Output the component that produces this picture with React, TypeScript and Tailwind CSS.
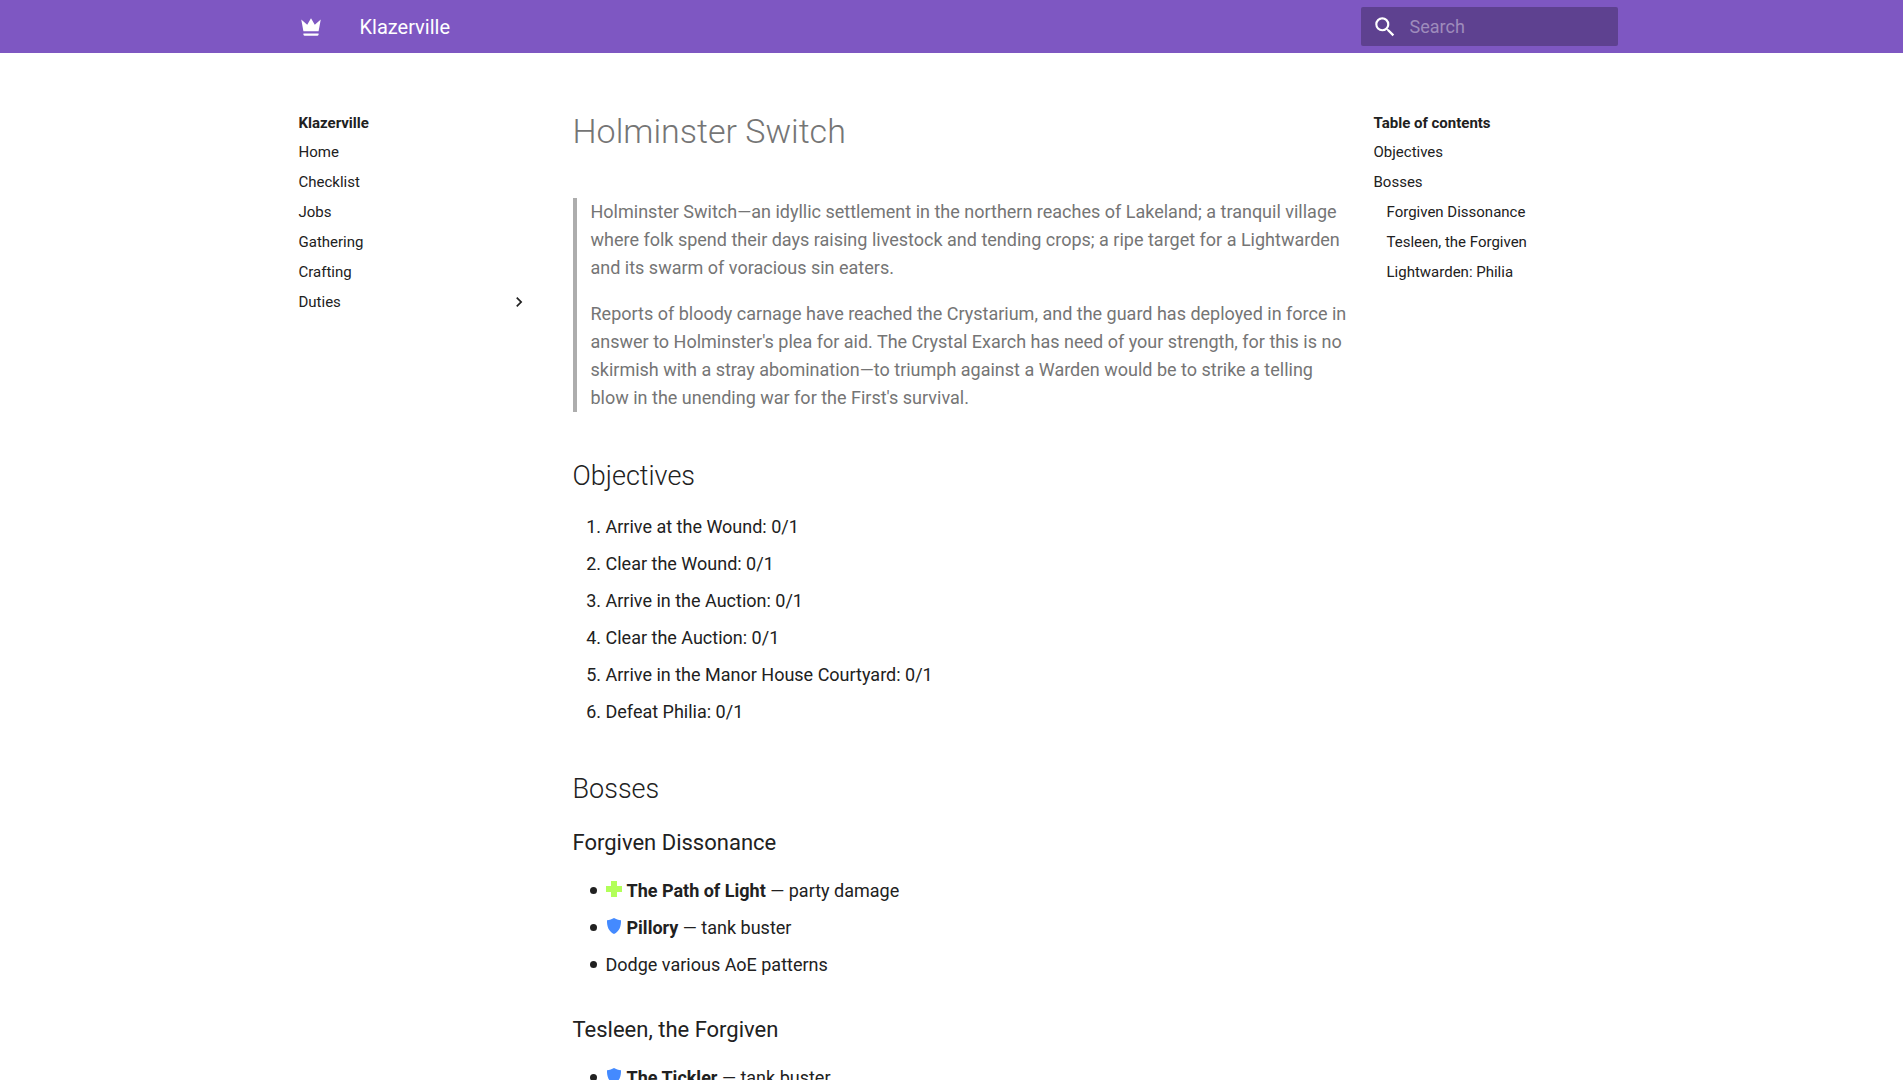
import React from "react";

const navItems = ["Home", "Checklist", "Jobs", "Gathering", "Crafting"];

const objectives = [
  "Arrive at the Wound: 0/1",
  "Clear the Wound: 0/1",
  "Arrive in the Auction: 0/1",
  "Clear the Auction: 0/1",
  "Arrive in the Manor House Courtyard: 0/1",
  "Defeat Philia: 0/1",
];

function CrownIcon() {
  return (
    <svg viewBox="0 0 24 24" className="size-[26px] fill-current" aria-hidden="true">
      <path d="M5 16 3 5l5.500 5L12 4l3.500 6L21 5l-2 11H5m14 3c0 .6-.4 1-1 1H6c-.6 0-1-.4-1-1v-1h14v1z" />
    </svg>
  );
}

function SearchIcon() {
  return (
    <svg viewBox="0 0 24 24" className="size-[26px] shrink-0 fill-current" aria-hidden="true">
      <path d="M9.500 3A6.500 6.500 0 0 1 16 9.500c0 1.610-.59 3.090-1.560 4.230l.27.270h.79l5 5-1.500 1.500-5-5v-.79l-.27-.27A6.516 6.516 0 0 1 9.500 16 6.500 6.500 0 0 1 3 9.500 6.500 6.500 0 0 1 9.500 3m0 2C7 5 5 7 5 9.500S7 14 9.500 14 14 12 14 9.500 12 5 9.500 5z" />
    </svg>
  );
}

function ChevronIcon() {
  return (
    <svg viewBox="0 0 24 24" className="size-5 fill-current" aria-hidden="true">
      <path d="M8.590 16.580 13.170 12 8.590 7.410 10 6l6 6-6 6-1.410-1.420z" />
    </svg>
  );
}

function HealIcon() {
  return (
    <svg viewBox="0 0 16 16" className="mr-[5px] inline-block size-4 align-[0px] fill-[#b2ff59]" role="img" aria-label="Healer">
      <path d="M5 0h6v5h5v6h-5v5H5v-5H0V5h5z" />
    </svg>
  );
}

function ShieldIcon() {
  return (
    <svg viewBox="0 0 16 16" className="mr-[5px] inline-block size-4 align-[0px] fill-[#448aff]" role="img" aria-label="Tank">
      <path d="M8 0c2 1.200 4.500 2 7 2.300.2 6-1.500 11.200-7 13.700C2.500 13.500.8 8.300 1 2.300 3.500 2 6 1.200 8 0z" />
    </svg>
  );
}

function Bullet({ children }: { children: React.ReactNode }) {
  return (
    <li className="before:mr-[9px] before:-ml-4 before:inline-block before:size-[7px] before:rounded-full before:bg-[#212121] before:align-[3px] before:content-['']">
      {children}
    </li>
  );
}

export default function App() {
  return (
    <div className="min-h-screen bg-white font-['Roboto',sans-serif] text-[#212121]">
      <header className="sticky top-0 z-10 bg-[#7e57c2] text-white">
        <div className="mx-auto flex h-[53px] max-w-[1342px] items-center px-[5px]">
          <a href="#home" aria-label="Klazerville" className="ml-3">
            <CrownIcon />
          </a>
          <span className="ml-9 text-[20px] leading-7">Klazerville</span>
          <label className="ml-auto flex h-[39px] w-[257px] items-center gap-3 rounded-xs bg-[#5e4190] pl-[11px]">
            <SearchIcon />
            <input
              type="text"
              aria-label="Search"
              placeholder="Search"
              className="w-full bg-transparent text-[18px] outline-none placeholder:text-[#9e8cbc]"
            />
          </label>
        </div>
      </header>

      <div className="mx-auto flex max-w-[1342px] items-start pt-[55px]">
        <nav aria-label="Klazerville" className="w-[266px] shrink-0 pt-[5px] pr-[18px] pl-[18px] text-[15px] leading-5">
          <p className="font-bold">Klazerville</p>
          <ul className="mt-[9px] flex flex-col gap-[10px]">
            {navItems.map((item) => (
              <li key={item}>
                <a href={"#" + item.toLowerCase()}>{item}</a>
              </li>
            ))}
            <li>
              <button type="button" className="flex w-full items-center justify-between">
                Duties
                <ChevronIcon />
              </button>
            </li>
          </ul>
        </nav>

        <main className="min-w-0 flex-1 pr-6 pl-[26px] text-[18px] leading-7">
          <h1 className="mb-[44px] text-[34px] leading-[46px] font-light text-[#757575]">Holminster Switch</h1>
          <blockquote className="flex flex-col gap-[18px] border-l-4 border-[#adadad] pl-[14px] text-[#757575]">
            <p>
              Holminster Switch—an idyllic settlement in the northern reaches of Lakeland; a tranquil village where folk
              spend their days raising livestock and tending crops; a ripe target for a Lightwarden and its swarm of
              voracious sin eaters.
            </p>
            <p>
              Reports of bloody carnage have reached the Crystarium, and the guard has deployed in force in answer to
              Holminster's plea for aid. The Crystal Exarch has need of your strength, for this is no skirmish with a
              stray abomination—to triumph against a Warden would be to strike a telling blow in the unending war for
              the First's survival.
            </p>
          </blockquote>

          <h2 id="objectives" className="mt-[45px] mb-[18px] text-[27px] leading-[38px] font-light">Objectives</h2>
          <ol className="flex list-decimal flex-col gap-[9px] pl-[33px]">
            {objectives.map((text) => (
              <li key={text}>{text}</li>
            ))}
          </ol>

          <h2 id="bosses" className="mt-[44px] mb-[18px] text-[27px] leading-[38px] font-light">Bosses</h2>
          <h3 id="dissonance" className="mb-[18px] text-[22px] leading-[33px]">Forgiven Dissonance</h3>
          <ul className="flex flex-col gap-[9px] pl-[33px]">
            <Bullet>
              <HealIcon />
              <strong>The Path of Light</strong> — party damage
            </Bullet>
            <Bullet>
              <ShieldIcon />
              <strong>Pillory</strong> — tank buster
            </Bullet>
            <Bullet>Dodge various AoE patterns</Bullet>
          </ul>

          <h3 id="tesleen" className="mt-[34px] mb-[18px] text-[22px] leading-[33px]">Tesleen, the Forgiven</h3>
          <ul className="flex flex-col gap-[9px] pl-[33px]">
            <Bullet>
              <ShieldIcon />
              <strong>The Tickler</strong> — tank buster
            </Bullet>
          </ul>
        </main>

        <nav aria-label="Table of contents" className="w-[249px] shrink-0 pt-[5px] text-[15px] leading-5">
          <p className="font-bold">Table of contents</p>
          <ul className="mt-[9px] flex flex-col gap-[10px]">
            <li><a href="#objectives">Objectives</a></li>
            <li>
              <a href="#bosses">Bosses</a>
              <ul className="mt-[10px] flex flex-col gap-[10px] pl-[13px]">
                <li><a href="#dissonance">Forgiven Dissonance</a></li>
                <li><a href="#tesleen">Tesleen, the Forgiven</a></li>
                <li><a href="#philia">Lightwarden: Philia</a></li>
              </ul>
            </li>
          </ul>
        </nav>
      </div>
    </div>
  );
}
